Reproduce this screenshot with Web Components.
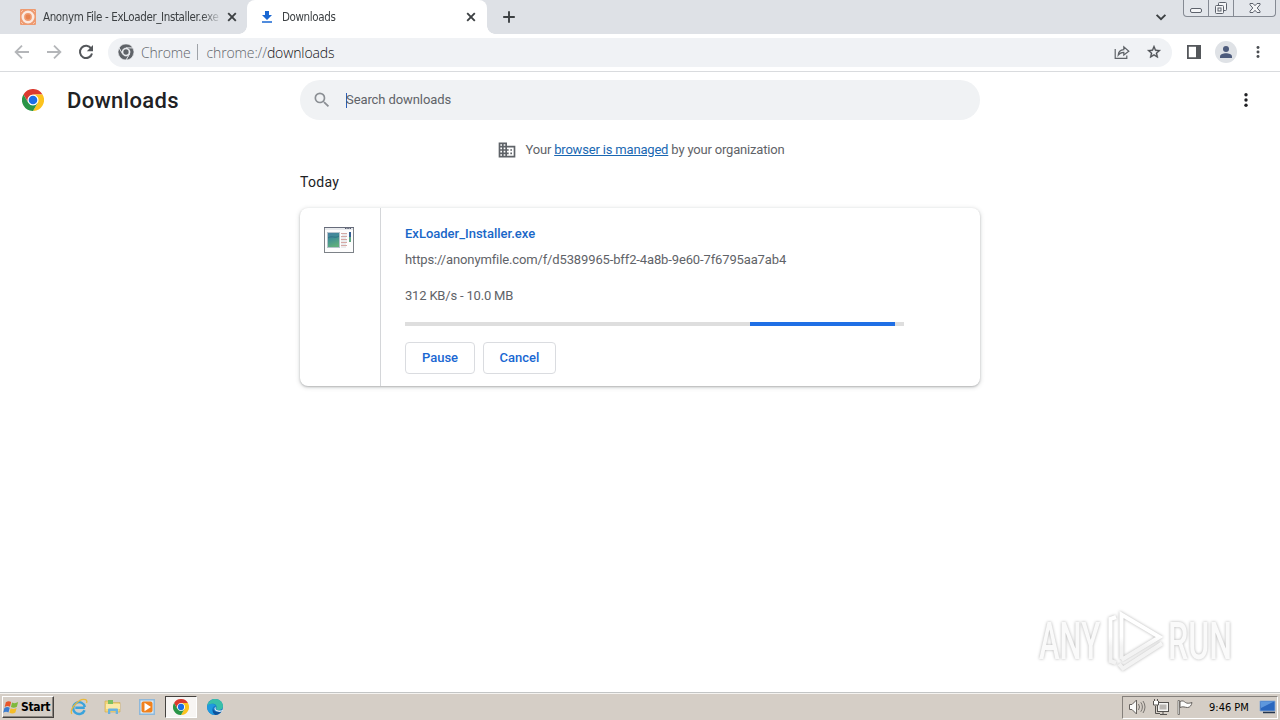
<!DOCTYPE html>
<html lang="en">
<head>
<meta charset="utf-8">
<title>Downloads</title>
<style>
  html, body { margin: 0; height: 100%; overflow: hidden; background: #fff; }
  body { display: flex; flex-direction: column; width: 1280px; height: 720px; font-family: Roboto, sans-serif; position: relative; }
  downloads-page { flex: 1; min-height: 0; }
</style>
</head>
<body>
  <tab-strip>
    <browser-tab icon="anonym">Anonym File - ExLoader_Installer.exe</browser-tab>
    <browser-tab icon="download" active>Downloads</browser-tab>
  </tab-strip>
  <browser-toolbar></browser-toolbar>
  <downloads-page>
    <download-item>
      <span slot="name">ExLoader_Installer.exe</span>
      <span slot="url">https://anonymfile.com/f/d5389965-bff2-4a8b-9e60-7f6795aa7ab4</span>
      <span slot="status">312 KB/s - 10.0 MB</span>
      <action-button slot="actions" style="width: 70px">Pause</action-button>
      <action-button slot="actions" style="width: 73px">Cancel</action-button>
    </download-item>
  </downloads-page>
  <task-bar></task-bar>
  <water-mark></water-mark>

<script>
const chromeArc = 'M24 12H44.8A24 24 0 0 0 3.2 12L13.6 30A12 12 0 0 1 24 12Z';

const icons = {
  chrome: ['0 0 48 48', `
    <circle cx="24" cy="24" r="13" fill="#fff"/>
    <path d="${chromeArc}" fill="#db3a2f"/>
    <path d="${chromeArc}" fill="#fcc31e" transform="rotate(120 24 24)"/>
    <path d="${chromeArc}" fill="#2a9547" transform="rotate(240 24 24)"/>
    <circle cx="24" cy="24" r="9.4" fill="#1b6ee6"/>`],
  chromeMono: ['0 0 48 48', `
    <g fill="#5f6368" stroke="#f0f2f5" stroke-width="2">
      <path d="${chromeArc}"/>
      <path d="${chromeArc}" transform="rotate(120 24 24)"/>
      <path d="${chromeArc}" transform="rotate(240 24 24)"/>
    </g>
    <circle cx="24" cy="24" r="8" fill="#5f6368"/>`],
  anonym: ['0 0 16 16', `
    <rect width="16" height="16" rx="1" fill="#ee9a70"/>
    <circle cx="8" cy="8" r="5.2" fill="none" stroke="#fbe9e0" stroke-width="2.6"/>
    <circle cx="8" cy="8" r="2.4" fill="#e8834f"/>
    <path d="M1 3l2-2M13 1l2 2M1 13l2 2M13 15l2-2" stroke="#f7c6ae"/>`],
  download: ['0 0 16 16', `<path d="M6 2h4v4h3L8 11 3 6h3zM3 12.2h10v1.6H3z" fill="#1967d2"/>`],
  close: ['0 0 16 16', `<path d="M4.2 4.2l7.6 7.6M11.8 4.2l-7.6 7.6" stroke="#3c4043" stroke-width="1.9"/>`],
  plus: ['0 0 16 16', `<path d="M8 2.2v11.6M2.2 8h11.6" stroke="#3c4043" stroke-width="1.9"/>`],
  chevron: ['0 0 16 16', `<path d="M3.6 5.8L8 10.2l4.4-4.4" fill="none" stroke="#3c4043" stroke-width="1.9"/>`],
  back: ['0 0 16 16', `<path d="M15 8H2M8 1.6L1.6 8 8 14.4" fill="none" stroke="#b4b6b9" stroke-width="1.8"/>`],
  forward: ['0 0 16 16', `<path d="M1 8h13M8 1.6L14.4 8 8 14.4" fill="none" stroke="#b4b6b9" stroke-width="1.8"/>`],
  reload: ['0 0 16 16', `<path d="M13.2 4.6A6.1 6.1 0 1 0 14 9.4" fill="none" stroke="#54575b" stroke-width="2"/><path d="M15 1v6.2H8.8z" fill="#54575b"/>`],
  share: ['0 0 16 16', `<path d="M1.2 5v9.4h11.6v-3M4.2 11.2c.2-3.4 2-5.4 5.6-5.6V2.8L14.8 7.2 9.8 11V8.4c-2.6 0-4.3.9-5.6 2.8z" fill="none" stroke="#5f6368" stroke-width="1.2"/>`],
  star: ['0 0 24 24', `<path d="M22 9.24l-7.19-.62L12 2 9.19 8.63 2 9.24l5.46 4.73L5.82 21 12 17.27 18.18 21l-1.63-7.03L22 9.24zM12 15.4l-3.76 2.27 1-4.28-3.32-2.88 4.38-.38L12 6.1l1.71 4.04 4.38.38-3.32 2.88 1 4.28L12 15.4z" fill="#4a4d51" stroke="#4a4d51" stroke-width=".5"/>`],
  panel: ['0 0 14 14', `<path d="M.9.9h12.2v12.2H.9z" fill="none" stroke="#54575b" stroke-width="1.8"/><path d="M9 1h4v12H9z" fill="#54575b"/>`],
  avatar: ['0 0 22 22', `<circle cx="11" cy="11" r="11" fill="#dfe2e6"/><circle cx="11" cy="8" r="3" fill="#4d5b7c"/><path d="M5 17v-1.6c0-2.1 3.4-3.2 6-3.2s6 1.1 6 3.2V17z" fill="#4d5b7c"/>`],
  dots: ['0 0 16 16', `<circle cx="8" cy="2.8" r="1.7"/><circle cx="8" cy="8" r="1.7"/><circle cx="8" cy="13.2" r="1.7"/>`],
  search: ['0 0 24 24', `<path d="M15.5 14h-.79l-.28-.27A6.47 6.47 0 0 0 16 9.5 6.5 6.5 0 1 0 9.5 16c1.61 0 3.09-.59 4.23-1.57l.27.28v.79l5 4.99L20.49 19l-4.99-5zm-6 0C7.01 14 5 11.99 5 9.5S7.01 5 9.5 5 14 7.01 14 9.5 11.99 14 9.5 14z" fill="#8b8f94"/>`],
  business: ['0 0 24 24', `<path d="M12 7V3H2v18h20V7H12zM6 19H4v-2h2v2zm0-4H4v-2h2v2zm0-4H4V9h2v2zm0-4H4V5h2v2zm4 12H8v-2h2v2zm0-4H8v-2h2v2zm0-4H8V9h2v2zm0-4H8V5h2v2zm10 12h-8v-2h2v-2h-2v-2h2v-2h-2V9h8v10zm-2-8h-2v2h2v-2zm0 4h-2v2h2v-2z" fill="#5f6368"/>`],
  exe: ['0 0 32 28', `
    <defs><linearGradient id="g" x2="0.3" y2="1"><stop stop-color="#4a7fa3"/><stop offset=".45" stop-color="#3f8f95"/><stop offset="1" stop-color="#5fae7c"/></linearGradient></defs>
    <rect x="1.5" y="1.5" width="29" height="25" fill="#fdfdfd" stroke="#7d8288"/>
    <path d="M1 1.5h30" stroke="#666b7a"/><path d="M2 3h28" stroke="#d4d8de"/>
    <path d="M22 2.5h6" stroke="#555b70" stroke-dasharray="1.5 .8"/>
    <rect x="4.5" y="6.5" width="12" height="15" fill="url(#g)" stroke="#b7c4cc"/>
    <path d="M5 12c4-3 7 1 11-2" stroke="#2f6f86" fill="none"/>
    <path d="M18 7.5h6M18 10.5h6M18 13.5h6M18 16.5h6M18 19.5h6" stroke="#d5a9a5"/>
    <path d="M19 9h5M18 12h5M18 15h6M18 18h5M18 21h5" stroke="#d8dadd"/>
    <path d="M27 6v5" stroke="#365f94" stroke-width="2"/><path d="M27 11v5" stroke="#5fa883" stroke-width="2"/>`],
  windows: ['0 0 18 18', `
    <path d="M3 3.5c2-1.3 4-1.3 5.6-.2L7.4 8.2C5.6 7.2 3.8 7.3 1.8 8.4z" fill="#e8572b"/>
    <path d="M9.6 3.8c2 1 4 .9 6.4-.5l-1.3 5c-2.2 1.3-4.3 1.4-6.3.3z" fill="#7fb93c"/>
    <path d="M1.5 9.5c2-1.2 3.8-1.2 5.6-.2l-1.3 5c-1.7-1-3.6-1-5.6.2z" fill="#3b7dd0"/>
    <path d="M8.1 9.8c2 1 4 .9 6.3-.4l-1.3 5c-2.1 1.3-4.3 1.3-6.3.2z" fill="#f5bd28"/>`],
  ie: ['0 0 18 18', `
    <path d="M14.8 9.8H5.3M14.6 12.2A5.9 5.9 0 1 1 14.9 9" fill="none" stroke="#3aa3dc" stroke-width="2.4"/>
    <path d="M1.8 15.8C-.8 11.5 9-.6 15.6 1.7c1.4.6 1.5 2 .9 3.3" fill="none" stroke="#e8b93c" stroke-width="1.3"/>`],
  folder: ['0 0 18 18', `
    <path d="M1 3h6l1 1.5h8V14H1z" fill="#f2d579" stroke="#cda94b" stroke-width=".6"/>
    <path d="M4 2h5v4H4z" fill="#7bbf63"/><path d="M2 6h14v5H2z" fill="#fbe9a6"/>
    <path d="M4 16v-4.500q0-1 1-1h8q1 0 1 1V16h-2.300v-3H6.300v3z" fill="#69b2df"/>`],
  player: ['0 0 18 18', `
    <rect x="1" y="1" width="16" height="16" fill="#8eb8da"/><rect x="2.5" y="2.5" width="13" height="13" fill="#d6e8f5"/>
    <rect x="3.5" y="3.5" width="11" height="11" rx="2" fill="#f1811d"/><path d="M6.5 4.800v8.400L13 9z" fill="#fff"/>`],
  edge: ['0 0 18 18', `
    <circle cx="9" cy="9" r="8" fill="#1679c8"/>
    <path d="M1.2 8C2 3.5 5.5 1 9.2 1 14 1 17 4.5 17 8c0 2.5-1.800 4-4.200 4-1.800 0-2.900-.7-2.600-1.500 1.300-2.400-.6-4.700-3.600-4.700C4 5.800 2 7 1.2 8z" fill="#38bfa8"/>
    <path d="M1.2 8c2.300-3.200 7-2.800 8.500-.2-4.500.5-4.600 6.900.8 8.900C5 17.500.5 13.500 1.2 8z" fill="#1f9adf"/>
    <path d="M7 10.500c0 3.200 4.500 4.700 8.600 2.500-1.500 2.800-4 4-6.400 4-2.200-1.200-3.200-4-2.200-6.500z" fill="#0f529c"/>
    <path d="M10 8.600c-1.100 1.900-.2 3.800 2.800 4 1.600.1 3-.3 4-.9.600-.4 0 1.500-1.200 1.900-3.500 1-7.600-.8-7.100-3.600z" fill="#e3ecf2"/>`],
  speaker: ['0 0 18 18', `<path d="M1.500 6.500H4L8.500 2v14L4 11.500H1.500z" fill="#fbfbfa" stroke="#66625e"/><path d="M10.500 6q2 3 0 6M12.800 4.300q3.200 4.700 0 9.400M15 3q4 6 0 12" fill="none" stroke="#77736f"/>`],
  network: ['0 0 18 18', `<rect x="5.5" y="4.5" width="11" height="9" fill="#f5f4f2" stroke="#55524f"/><rect x="7.5" y="6.5" width="7" height="5" fill="#bab6b2"/><path d="M8 16.500h7M11 14v2M3.500 8v7.500H8" stroke="#55524f" fill="none"/><path d="M1.500 3v4h5V3M2.500 1v2M5.500 1v2" fill="#fff" stroke="#55524f"/>`],
  flag: ['0 0 18 18', `<path d="M2 2.500h1.500V16.500H2z" fill="#fff" stroke="#66625e" stroke-width=".8"/><path d="M4 3.500c3-1.500 4 0 5.500 1s3.500 1 6.500 0c-.6 3-2 5-4.500 5S7 8 4 9.500z" fill="#fdfdfc" stroke="#66625e"/>`],
  desktop: ['0 0 18 18', `<path d="M1 3h15v10H1z" fill="#2a67bf" stroke="#86a9d6" stroke-width=".8"/><path d="M1.500 3.500H15L2 10z" fill="#5d97dd"/><path d="M4 14.500h12" stroke="#24364f" stroke-width="1.500"/>`],
  minimize: ['0 0 14 14', `<rect x="1.500" y="7.500" width="11" height="4" rx="1.500" fill="#f4f5f7" stroke="#5d626c"/>`],
  restore: ['0 0 14 14', `<g fill="#f4f5f7" stroke="#5d626c"><rect x="4.500" y="1.500" width="8" height="8" rx="1"/><rect x="1.500" y="4.500" width="8" height="8" rx="1"/><rect x="4" y="7" width="3" height="3"/></g>`],
  winclose: ['0 0 14 14', `<path d="M2 2.500h3L7 4.700l2-2.200h3v1.300L9.200 7l2.800 3.200v1.300H9L7 9.300l-2 2.200H2v-1.300L4.800 7 2 3.800z" fill="#f4f5f7" stroke="#5d626c"/>`]
};

// Shared base: builds the shadow root from the class template
class BaseElement extends HTMLElement {
  connectedCallback() {
    if (this.shadowRoot) return;
    this.attachShadow({ mode: 'open' });
    this.shadowRoot.innerHTML = this.template();
  }
}

class UiIcon extends BaseElement {
  template() {
    const [box, body] = icons[this.getAttribute('name')];
    const size = this.getAttribute('size') || 16;
    return `
      <style>
        :host { display: inline-flex; flex: none; }
        svg { display: block; }
      </style>
      <svg width="${size}" height="${this.getAttribute('h') || size}" viewBox="${box}" fill="currentColor">${body}</svg>`;
  }
}
customElements.define('ui-icon', UiIcon);

class BrowserTab extends BaseElement {
  template() {
    return `
      <style>
        :host {
          display: flex;
          align-items: center;
          box-sizing: border-box;
          position: relative;
          width: 247px;
          padding: 0 7px 0 20px;
          color: #3c4043;
          font: 11.5px "DejaVu Sans Condensed", sans-serif;
        }
        :host([active]) {
          width: 240px;
          padding: 0 8px 0 12px;
          background: #fff;
          border-radius: 8px 8px 0 0;
        }
        :host([active])::before, :host([active])::after {
          content: "";
          position: absolute;
          bottom: 0;
          width: 8px;
          height: 8px;
        }
        :host([active])::before { left: -8px; background: radial-gradient(circle at 0 0, transparent 7.5px, #fff 8px); }
        :host([active])::after { right: -8px; background: radial-gradient(circle at 100% 0, transparent 7.5px, #fff 8px); }
        .title {
          flex: 1;
          margin-left: 7px;
          overflow: hidden;
          white-space: nowrap;
          letter-spacing: -.38px;
          -webkit-mask-image: linear-gradient(to right, #000 calc(100% - 22px), transparent calc(100% - 2px));
        }
      </style>
      <ui-icon name="${this.getAttribute('icon')}"></ui-icon>
      <div class="title"><slot></slot></div>
      <ui-icon name="close"></ui-icon>`;
  }
}
customElements.define('browser-tab', BrowserTab);

class TabStrip extends BaseElement {
  template() {
    return `
      <style>
        :host { display: flex; height: 34px; background: #dee1e6; }
        .plus { margin: 9px 0 0 14px; }
        .right { margin-left: auto; display: flex; align-items: flex-start; }
        .chevron { margin: 9px 14px 0 0; }
        .controls {
          display: flex;
          box-sizing: border-box;
          width: 93px;
          height: 17px;
          margin-right: 4px;
          border: 1px solid #858a93;
          border-top: 0;
          border-radius: 0 0 4px 4px;
          background: #e3e6eb;
        }
        .controls span { display: flex; justify-content: center; align-items: center; width: 24px; }
        .controls span + span { border-left: 1px solid #858a93; }
        .controls span:last-child { flex: 1; }
      </style>
      <slot></slot>
      <ui-icon class="plus" name="plus"></ui-icon>
      <div class="right">
        <ui-icon class="chevron" name="chevron"></ui-icon>
        <div class="controls">
          <span><ui-icon name="minimize" size="14"></ui-icon></span>
          <span><ui-icon name="restore" size="14"></ui-icon></span>
          <span><ui-icon name="winclose" size="14"></ui-icon></span>
        </div>
      </div>`;
  }
}
customElements.define('tab-strip', TabStrip);

class BrowserToolbar extends BaseElement {
  template() {
    return `
      <style>
        :host {
          display: flex;
          align-items: center;
          box-sizing: border-box;
          height: 38px;
          padding: 0 14px 1px;
          background: #fff;
          border-bottom: 1px solid #d9dbde;
          color: #4a4d51;
        }
        .nav { display: flex; gap: 16px; }
        .omnibox {
          display: flex;
          align-items: center;
          box-sizing: border-box;
          width: 1064px;
          height: 29px;
          margin: 0 15px 0 14px;
          padding: 0 10px;
          border-radius: 15px;
          background: #f0f2f5;
          color: #62666b;
          font: 300 14px "Open Sans", "Noto Sans", sans-serif;
          letter-spacing: -.12px;
          white-space: nowrap;
        }
        .chip { margin-left: 7px; letter-spacing: -.2px; }
        .divider { width: 1px; height: 16px; margin: 0 8px 0 7px; background: #9fa3a8; }
        b { font-weight: 300; color: #101114; }
        .end { display: flex; gap: 16px; margin-left: auto; }
        .right { display: flex; align-items: center; gap: 14px; }
      </style>
      <div class="nav">
        <ui-icon name="back"></ui-icon>
        <ui-icon name="forward"></ui-icon>
        <ui-icon name="reload"></ui-icon>
      </div>
      <div class="omnibox">
        <ui-icon name="chromeMono"></ui-icon>
        <span class="chip">Chrome</span>
        <span class="divider"></span>
        <span>chrome://<b>downloads</b></span>
        <div class="end">
          <ui-icon name="share"></ui-icon>
          <ui-icon name="star"></ui-icon>
        </div>
      </div>
      <div class="right">
        <ui-icon name="panel" size="14"></ui-icon>
        <ui-icon name="avatar" size="22"></ui-icon>
        <ui-icon name="dots" size="14"></ui-icon>
      </div>`;
  }
}
customElements.define('browser-toolbar', BrowserToolbar);

class DownloadsPage extends BaseElement {
  template() {
    return `
      <style>
        :host { display: flex; flex-direction: column; background: #fff; font-size: 13px; color: #5f6368; white-space: nowrap; }
        header { display: grid; grid-template-columns: 300px 680px 1fr; align-items: center; height: 56px; }
        .brand { display: flex; align-items: center; padding-left: 22px; color: #202124; }
        h1 { margin: 0 0 0 23px; font-size: 22px; font-weight: 500; letter-spacing: .3px; }
        .search { display: flex; align-items: center; height: 40px; border-radius: 20px; background: #f0f2f4; }
        .search ui-icon { margin-left: 12px; }
        .caret { width: 1px; height: 15px; margin: 0 -1px 0 14px; background: #2c5fb8; }
        .placeholder { padding-bottom: 2px; letter-spacing: -.09px; }
        .more { justify-self: end; margin-right: 26px; color: #202124; }
        .managed { display: flex; align-items: center; justify-content: center; height: 20px; margin-top: 12px; padding-left: 2px; }
        .managed p { margin: 0 0 2px 8px; letter-spacing: -.18px; }
        a { color: #1967b2; text-decoration: underline; }
        main { width: 680px; margin: 0 auto; }
        h2 { margin: 14px 0 18px; font-size: 14px; line-height: 16px; font-weight: 400; color: #202124; letter-spacing: .3px; }
      </style>
      <header>
        <div class="brand"><ui-icon name="chrome" size="22"></ui-icon><h1>Downloads</h1></div>
        <div class="search"><ui-icon name="search" size="20"></ui-icon><span class="caret"></span><span class="placeholder">Search downloads</span></div>
        <ui-icon class="more" name="dots"></ui-icon>
      </header>
      <div class="managed"><ui-icon name="business" size="20"></ui-icon><p>Your <a>browser is managed</a> by your organization</p></div>
      <main>
        <h2>Today</h2>
        <slot></slot>
      </main>`;
  }
}
customElements.define('downloads-page', DownloadsPage);

class ActionButton extends BaseElement {
  template() {
    return `
      <style>
        :host {
          display: flex;
          align-items: center;
          justify-content: center;
          box-sizing: border-box;
          height: 32px;
          border: 1px solid #dadce0;
          border-radius: 4px;
          color: #1967d2;
          font-weight: 500;
        }
      </style>
      <slot></slot>`;
  }
}
customElements.define('action-button', ActionButton);

class DownloadItem extends BaseElement {
  template() {
    return `
      <style>
        :host {
          display: flex;
          height: 178px;
          border-radius: 8px;
          background: #fff;
          box-shadow: 0 1px 2px rgba(60, 64, 67, .3), 0 1px 4px 1px rgba(60, 64, 67, .15);
        }
        .thumb { display: flex; justify-content: center; align-items: flex-start; width: 81px; padding: 18px 2px 0 0; box-sizing: border-box; border-right: 1px solid #d4d6d9; }
        .body { display: flex; flex-direction: column; padding-left: 24px; line-height: 16px; }
        .name { margin-top: 18px; color: #1967c8; font-weight: 500; }
        .url { margin-top: 10px; letter-spacing: -.13px; }
        .status { margin-top: 20px; letter-spacing: -.19px; }
        .bar { width: 499px; height: 4px; margin-top: 18px; background: #dedede; }
        .bar i { display: block; width: 145px; height: 4px; margin-left: 345px; background: #1f6fe5; }
        .actions { display: flex; gap: 8px; margin-top: 16px; }
      </style>
      <div class="thumb"><ui-icon name="exe" size="32" h="28"></ui-icon></div>
      <div class="body">
        <div class="name"><slot name="name"></slot></div>
        <div class="url"><slot name="url"></slot></div>
        <div class="status"><slot name="status"></slot></div>
        <div class="bar"><i></i></div>
        <div class="actions"><slot name="actions"></slot></div>
      </div>`;
  }
}
customElements.define('download-item', DownloadItem);

class TaskBar extends BaseElement {
  template() {
    return `
      <style>
        :host {
          display: flex;
          align-items: center;
          box-sizing: border-box;
          height: 28px;
          padding: 1px 2px 0 2px;
          border-top: 1px solid #c3c5c5;
          background: #d5cec6;
          box-shadow: inset 0 1px #f5f3f0;
          color: #000;
          font: 11px "DejaVu Sans Condensed", sans-serif;
        }
        .start {
          display: flex;
          align-items: center;
          box-sizing: border-box;
          width: 52px;
          height: 22px;
          border: 1px solid;
          border-color: #fff #45423f #45423f #fff;
          box-shadow: inset -1px -1px #8b8680;
          font-size: 12px;
          font-weight: 700;
          letter-spacing: -.35px;
        }
        .start span { margin-left: 1px; }
        .apps { display: flex; gap: 2px; margin-left: 9px; }
        .app { display: flex; align-items: center; justify-content: center; box-sizing: border-box; width: 32px; height: 22px; }
        .active { border: 1px solid; border-color: #45423f #fff #fff #45423f; background: #f7f5f3; }
        .tray {
          display: flex;
          align-items: center;
          box-sizing: border-box;
          width: 156px;
          height: 23px;
          margin-left: auto;
          padding-left: 5px;
          border: 1px solid;
          border-color: #85807b #fff #fff #85807b;
          white-space: nowrap;
        }
        .tray ui-icon + ui-icon { margin-left: 6px; }
        .clock { margin-left: 15px; }
        .tray .desk { margin-left: auto; }
      </style>
      <div class="start"><ui-icon name="windows" size="17"></ui-icon><span>Start</span></div>
      <div class="apps">
        <span class="app"><ui-icon name="ie" size="18"></ui-icon></span>
        <span class="app"><ui-icon name="folder" size="18"></ui-icon></span>
        <span class="app"><ui-icon name="player" size="18"></ui-icon></span>
        <span class="app active"><ui-icon name="chrome" size="16"></ui-icon></span>
        <span class="app"><ui-icon name="edge" size="18"></ui-icon></span>
      </div>
      <div class="tray">
        <ui-icon name="speaker" size="18"></ui-icon>
        <ui-icon name="network" size="18"></ui-icon>
        <ui-icon name="flag" size="18"></ui-icon>
        <span class="clock">9:46 PM</span>
        <ui-icon class="desk" name="desktop" size="18"></ui-icon>
      </div>`;
  }
}
customElements.define('task-bar', TaskBar);

class WaterMark extends BaseElement {
  template() {
    return `
      <style>
        :host { position: absolute; right: 40px; bottom: 44px; pointer-events: none; }
        svg { display: block; overflow: visible; filter: drop-shadow(0 0 1.5px rgba(0, 0, 0, .3)); }
        text { font: 500 51px Roboto, sans-serif; }
      </style>
      <svg width="208" height="72" viewBox="0 0 208 72">
        <defs>
          <linearGradient id="fade" gradientUnits="userSpaceOnUse" x1="0" y1="0" x2="0" y2="72">
            <stop offset=".45" stop-color="#fff"/>
            <stop offset=".6" stop-color="#f3f3f3"/>
          </linearGradient>
        </defs>
        <text transform="translate(7 55) scale(.61 1)" fill="#fafafa">ANY</text>
        <text transform="translate(136 55) scale(.63 1)" fill="#fafafa">RUN</text>
        <g fill="none" stroke="url(#fade)" stroke-width="4">
          <path d="M89.500 55V10.500l38 22.500-38 23"/>
          <path d="M84 13l-5.500 2v42l5.500 2M87 60l4 4.500 39-25"/>
        </g>
      </svg>`;
  }
}
customElements.define('water-mark', WaterMark);
</script>
</body>
</html>
